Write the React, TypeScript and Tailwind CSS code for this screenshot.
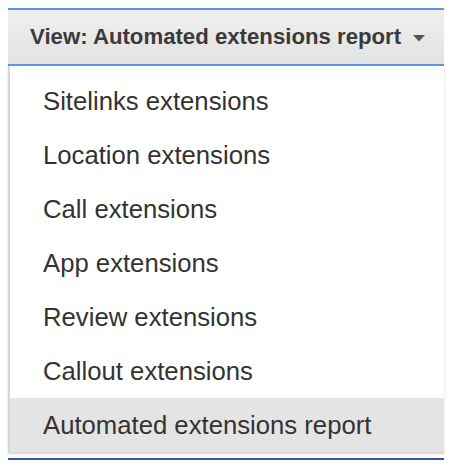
const items = [
  'Sitelinks extensions',
  'Location extensions',
  'Call extensions',
  'App extensions',
  'Review extensions',
  'Callout extensions',
  'Automated extensions report',
];

export default function App() {
  const selected = 'Automated extensions report';

  return (
    <div
      className="w-[452px] h-[472px] bg-white pt-2"
      style={{ fontFamily: '"Liberation Sans", Arial, sans-serif' }}
    >
      <div className="ml-2 w-[436px]">
        {/* header button */}
        <div className="h-[58px] border-t-2 border-b-2 border-[#5d95e6] bg-gradient-to-b from-[#efefef] to-[#e2e2e2] flex items-center pl-[22px]">
          <span className="text-[22.2px] font-bold text-[#3a3a3a]">
            View: Automated extensions report
          </span>
          <svg width="12" height="7" viewBox="0 0 12 7" className="ml-[12px] mt-[2px]">
            <path d="M0 0 H12 L6 6.5 Z" fill="#555" />
          </svg>
        </div>

        {/* menu */}
        <div className="pt-2 border-l-2 border-[#d6d6d6] bg-white shadow-[0_2px_2px_rgba(0,0,0,0.18)]">
          {items.map(item => (
            <div
              key={item}
              className={`h-[54px] flex items-center pl-[33px] text-[25.7px] text-[#333] ${
                item === selected ? 'bg-[#e4e4e4]' : ''
              }`}
            >
              {item}
            </div>
          ))}
        </div>

        <div className="mt-[6px] h-[2px] bg-[#3754a6]" />
      </div>
    </div>
  );
}
